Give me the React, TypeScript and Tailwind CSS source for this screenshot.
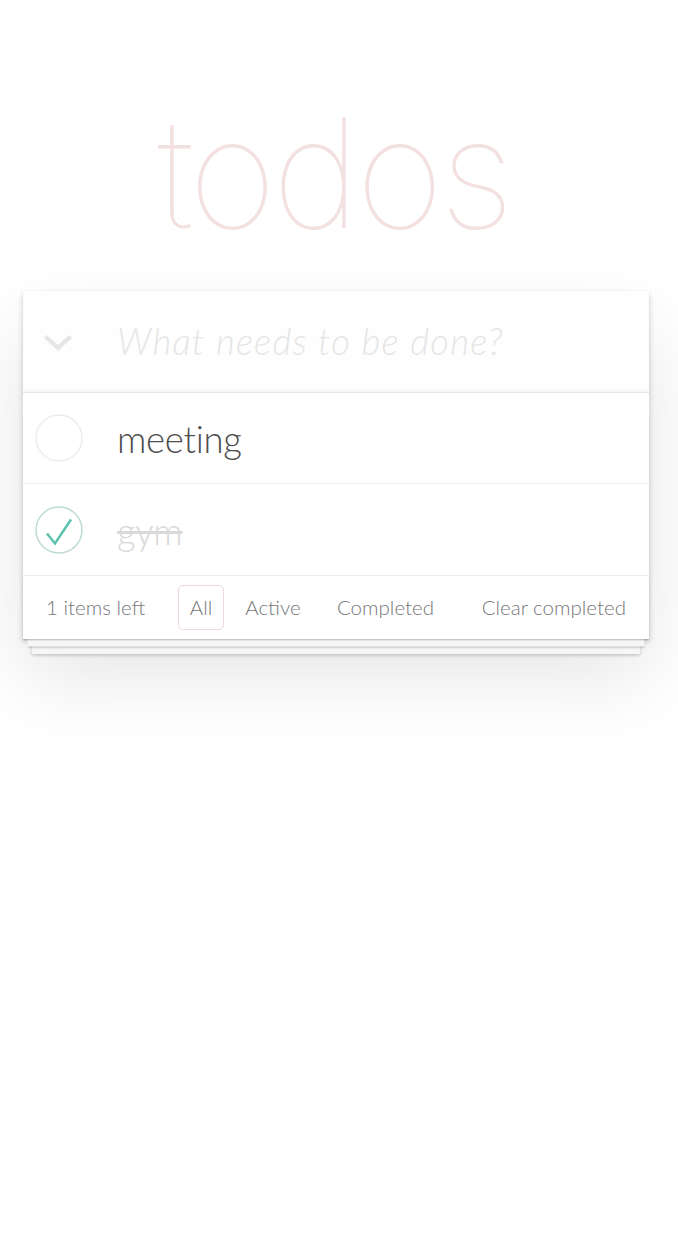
import React from "react";

export default function App() {
  return (
    <div className="min-h-[1236px] w-[678px] bg-white font-['Lato','Liberation_Sans',sans-serif] font-light">
      <div className="ml-[23px] w-[626px]">
        <h1 className="h-[291px] pr-[5px] pt-[86px] text-center font-['Inter',sans-serif] text-[152px] font-thin leading-[1.15] tracking-[-4.5px] text-[rgba(175,47,47,0.15)]">
          todos
        </h1>
        <section className="bg-white shadow-[0_3px_6px_0_rgba(0,0,0,0.2),0_38px_76px_0_rgba(0,0,0,0.1)]">
          <header className="flex h-[101px] items-center bg-[rgba(0,0,0,0.003)] shadow-[inset_0_-3px_2px_rgba(0,0,0,0.03)]">
            <div className="flex w-[94px] justify-start pl-[20px]">
              <svg width="30" height="18" viewBox="0 0 30 18" className="mt-[5px]">
                <path d="M1 3 L4 0 L15 10 L26 0 L29 3 L15 16 Z" fill="#e6e6e6" />
              </svg>
            </div>
            <div className="whitespace-nowrap text-[36.5px] italic font-light tracking-[1.2px] text-[#e6e6e6]">
              What needs to be done?
            </div>
          </header>
          <ul className="border-t border-[#e6e6e6]">
            <li className="flex h-[91px] items-center border-b border-[#ededed]">
              <div className="flex w-[94px] justify-start pl-[12px]">
                <svg width="48" height="48" viewBox="0 0 48 48">
                  <circle cx="24" cy="24" r="23" fill="none" stroke="#ededed" strokeWidth="1.5" />
                </svg>
              </div>
              <span className="pt-[3px] text-[36.5px] font-light tracking-[-0.3px] text-[#4d4d4d]">meeting</span>
            </li>
            <li className="flex h-[92px] items-center border-b border-[#ededed]">
              <div className="flex w-[94px] justify-start pl-[12px]">
                <svg width="48" height="48" viewBox="0 0 48 48">
                  <circle cx="24" cy="24" r="23" fill="none" stroke="#bddad5" strokeWidth="1.5" />
                  <polyline points="12,27.5 20,37.5 36,13.5" fill="none" stroke="#5dc2af" strokeWidth="2.5" />
                </svg>
              </div>
              <span className="pt-[3px] text-[36.5px] font-light tracking-[-0.3px] text-[#d9d9d9] line-through">gym</span>
            </li>
          </ul>
          <footer className="flex h-[63px] items-center whitespace-nowrap px-[23px] text-[20.5px] text-[#777] shadow-[0_1.5px_1.5px_rgba(0,0,0,0.2),0_12px_0_-4.5px_#f6f6f6,0_13.5px_1.5px_-4.5px_rgba(0,0,0,0.2),0_24px_0_-9px_#f6f6f6,0_25.5px_3px_-9px_rgba(0,0,0,0.2)]">
            <span className="w-[132px]">1 items left</span>
            <ul className="flex items-center">
              <li className="flex h-[45px] w-[46px] items-center justify-center rounded-[5px] border-[1.5px] border-[#f0d7d7]">All</li>
              <li className="ml-[11px] flex h-[45px] w-[76px] items-center justify-center">Active</li>
              <li className="ml-[14px] flex h-[45px] w-[121px] items-center justify-center">Completed</li>
            </ul>
            <span className="ml-auto">Clear completed</span>
          </footer>
        </section>
      </div>
    </div>
  );
}
